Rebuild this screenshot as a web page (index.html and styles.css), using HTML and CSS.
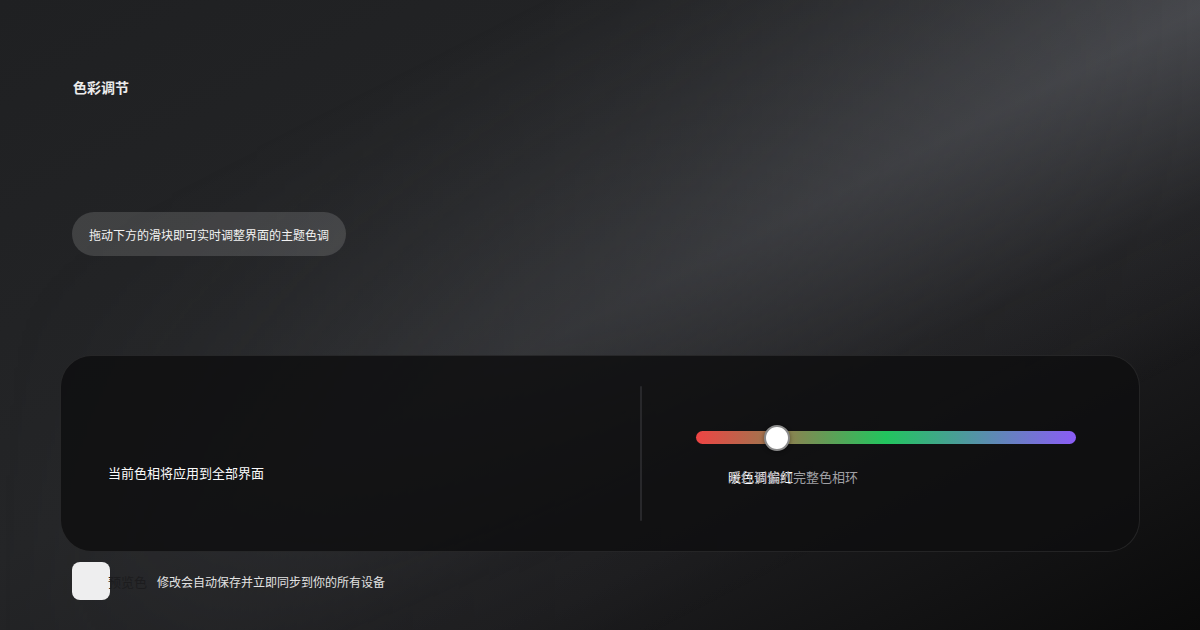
FILE: index.html
```html
<!DOCTYPE html>
<html lang="zh-CN">
<head>
    <meta charset="utf-8">
    <title>色彩调节</title>
    <meta name="viewport" content="width=device-width, initial-scale=1.0">
    <link rel="stylesheet" href="styles.css">
</head>
<body>

    <div class="page">
        <!-- Header -->
        <div class="header">
            <h1 class="title">色彩调节</h1>
        </div>

        <div class="hint-row">
            <span class="hint-pill">拖动下方的滑块即可实时调整界面的主题色调</span>
        </div>

        <!-- Colour picker card -->
        <section class="picker-card">
            <div class="picker-info">
                <p class="picker-label">当前色相将应用到全部界面</p>
            </div>

            <div class="picker-divider"></div>

            <div class="picker-control">
                <div class="hue-track">
                    <span class="hue-thumb" style="left: 21.3%"></span>
                </div>
                <div class="hue-labels">
                    <span class="hue-value">暖色调偏红</span>
                    <span class="hue-caption">从红到紫的完整色相环</span>
                </div>
            </div>
        </section>

        <div class="footer">
            <div class="swatch"><span class="swatch-name">预览色</span></div>
            <p class="footer-text">修改会自动保存并立即同步到你的所有设备</p>
        </div>
    </div>

</body>
</html>
```

FILE: styles.css
```css
body {
    margin: 0;
    width: 1200px;
    height: 630px;
    overflow: hidden;
    position: relative;
    font-family: 'Inter', 'Noto Sans CJK SC', sans-serif;
    color: #fff;
    background: linear-gradient(153deg, #1f2022 0%, #242527 45%, #1c1c1e 72%, #0a0a0a 100%);
}

/* soft light streak from the top right corner */
body::before {
    content: "";
    position: absolute;
    inset: 0;
    background: linear-gradient(153deg, transparent 22%, rgba(122, 124, 132, 0.42) 50%, rgba(122, 124, 132, 0.08) 66%, transparent 78%);
    -webkit-mask-image: linear-gradient(to right, transparent 0%, rgba(0, 0, 0, 0.35) 30%, #000 100%);
    mask-image: linear-gradient(to right, transparent 0%, rgba(0, 0, 0, 0.35) 30%, #000 100%);
}

.page {
    position: relative;
    padding: 76px 60px 0;
    display: flex;
    flex-direction: column;
}

/* Header */
.header {
    padding-left: 13px;
}

.title {
    margin: 0;
    font-size: 14px;
    line-height: 24px;
    font-weight: 600;
    color: #ececec;
}

.hint-row {
    margin-top: 112px;
    padding-left: 12px;
    display: flex;
}

.hint-pill {
    display: inline-flex;
    align-items: center;
    height: 44px;
    padding: 0 17px;
    border-radius: 22px;
    background: rgba(255, 255, 255, 0.14);
    font-size: 12px;
    color: #f2f2f2;
}

/* Card */
.picker-card {
    margin-top: 99px;
    height: 197px;
    box-sizing: border-box;
    padding: 30px 0;
    display: flex;
    border-radius: 32px;
    border: 1px solid rgba(255, 255, 255, 0.09);
    background: rgba(14, 14, 16, 0.84);
}

.picker-info {
    width: 579px;
    box-sizing: border-box;
    padding: 0 47px;
    display: flex;
    align-items: center;
}

.picker-label {
    margin: 38px 0 0;
    font-size: 13px;
    color: #fafafa;
}

.picker-divider {
    width: 2px;
    background: #28282b;
    border-radius: 1px;
}

.picker-control {
    flex: 1;
    padding: 45px 0 0 54px;
}

.hue-track {
    position: relative;
    width: 380px;
    height: 13px;
    border-radius: 7px;
    background: linear-gradient(90deg, #ef4444 0%, #22c55e 50%, #8b5cf6 100%);
}

.hue-thumb {
    position: absolute;
    top: 50%;
    width: 22px;
    height: 22px;
    margin: -13px 0 0 -13px;
    border-radius: 50%;
    background: #fff;
    border: 2px solid #8a8a8a;
    box-shadow: 0 1px 4px rgba(0, 0, 0, 0.4);
}

/* value and caption share one cell */
.hue-labels {
    display: grid;
    margin: 23px 0 0 32px;
}

.hue-value,
.hue-caption {
    grid-area: 1 / 1;
    white-space: nowrap;
}

.hue-value {
    font-size: 13px;
    color: #fff;
}

.hue-caption {
    font-size: 13px;
    color: #a0a0a4;
}

/* Footer */
.footer {
    margin-top: 10px;
    padding-left: 12px;
    display: flex;
    align-items: center;
}

.swatch {
    width: 38px;
    height: 38px;
    border-radius: 8px;
    background: #eeeeef;
    display: flex;
    align-items: center;
}

.swatch-name {
    padding-left: 36px;
    font-size: 13px;
    color: #1c1c1e;
    white-space: nowrap;
}

.footer-text {
    margin: 0 0 0 47px;
    font-size: 12px;
    color: #e2e2e2;
}
```
